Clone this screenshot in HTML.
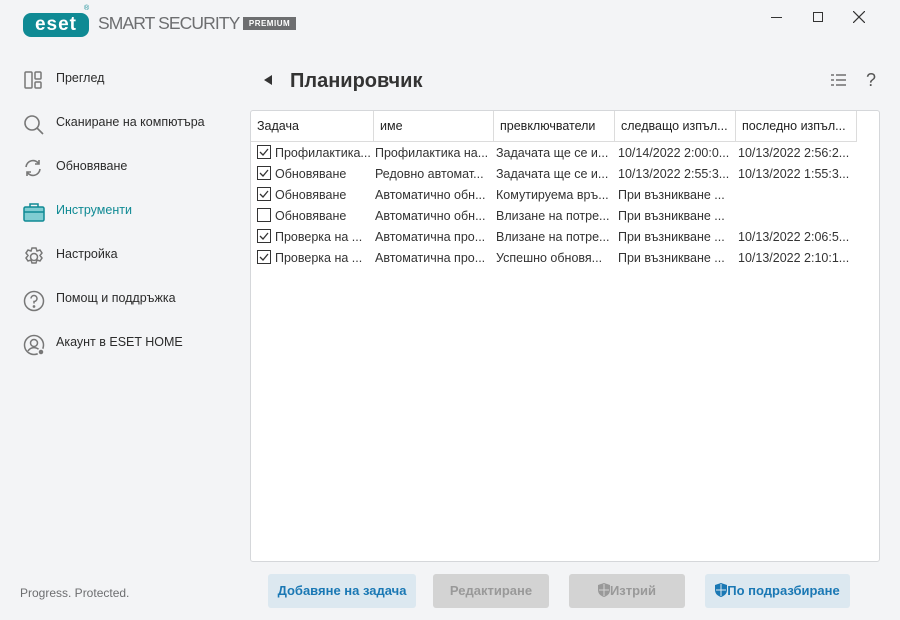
<!DOCTYPE html>
<html><head><meta charset="utf-8"><style>
*{margin:0;padding:0;box-sizing:border-box}
body{width:900px;height:620px;background:#f3f4f6;font-family:"Liberation Sans",sans-serif;color:#222;position:relative;overflow:hidden;font-size:13px}
.a{position:absolute}
.nav{position:absolute;left:56px;font-size:12.5px;color:#2b2b2b}
.ic{position:absolute;left:23px}
.tbl{position:absolute;left:250px;top:110px;width:630px;height:452px;background:#fff;border:1px solid #d5d7da;border-radius:3px;overflow:hidden}
.hd{position:absolute;top:0;height:31px;border-right:1px solid #dcdcdc;border-bottom:1px solid #dcdcdc;line-height:31px;padding-left:6px;font-size:12.5px;color:#222;white-space:nowrap}
.cell{position:absolute;font-size:12.5px;color:#333;white-space:nowrap;line-height:16px}
.cb{position:absolute;left:6px;width:14px;height:14px;border:1px solid #333;background:#fff}
.btn{position:absolute;top:574px;height:34px;border-radius:3px;font-size:13px;font-weight:bold;text-align:center;line-height:34px}
</style></head><body>
<!-- logo -->
<div class="a" style="left:23px;top:13px;width:66px;height:24px;background:#0f8a94;border-radius:8px;color:#fff;font-size:19px;font-weight:bold;line-height:23px;text-align:center;letter-spacing:1px">eset</div>
<div class="a" style="left:84px;top:5px;font-size:7px;color:#0f8a94">®</div>
<div class="a" style="left:98px;top:13px;font-size:17.5px;color:#6d6e70;letter-spacing:-0.9px">SMART SECURITY</div>
<div class="a" style="left:243px;top:17px;width:53px;height:13px;background:#6d6e70;color:#fff;font-size:8px;font-weight:bold;text-align:center;line-height:13px;letter-spacing:0.5px">PREMIUM</div>
<!-- window controls -->
<div class="a" style="left:771px;top:17px;width:11px;height:1px;background:#333"></div>
<div class="a" style="left:813px;top:12px;width:10px;height:10px;border:1px solid #333"></div>
<svg class="a" style="left:853px;top:11px" width="12" height="12"><path d="M0 0L12 12M12 0L0 12" stroke="#333" stroke-width="1.2"/></svg>
<svg class="a" style="left:831px;top:74px" width="15" height="13"><path d="M0 1h3M5 1h10M0 6h3M5 6h10M0 11h3M5 11h10" stroke="#555" stroke-width="1.2"/></svg>
<div class="a" style="left:866px;top:70px;font-size:18px;color:#555">?</div>
<!-- sidebar -->
<svg class="ic" style="top:70px" width="20" height="20" fill="none" stroke="#777" stroke-width="1.5"><rect x="2" y="2" width="7" height="16" rx="1"/><rect x="12" y="2" width="6" height="7" rx="1"/><rect x="12" y="12" width="6" height="6" rx="1"/></svg>
<div class="nav" style="top:71px">Преглед</div>
<svg class="ic" style="top:114px" width="22" height="22" fill="none" stroke="#777" stroke-width="1.6"><circle cx="9" cy="9" r="7"/><path d="M14 14l6 6"/></svg>
<div class="nav" style="top:115px">Сканиране на компютъра</div>
<svg class="ic" style="top:158px" width="20" height="20" fill="none" stroke="#777" stroke-width="1.6"><path d="M3 9a7 7 0 0 1 13-3M17 11a7 7 0 0 1-13 3M16 2v4h-4M4 18v-4h4"/></svg>
<div class="nav" style="top:159px">Обновяване</div>
<svg class="ic" style="top:202px" width="22" height="20"><rect x="1" y="5" width="20" height="14" rx="1.5" fill="#80cdd2" stroke="#0f8a94" stroke-width="1.5"/><path d="M7 5V2h8v3M1 10h20" stroke="#0f8a94" stroke-width="1.5" fill="none"/></svg>
<div class="nav" style="top:203px;color:#0f8a94">Инструменти</div>
<svg class="ic" style="top:246px" width="22" height="22" fill="none" stroke="#777" stroke-width="1.5"><circle cx="11" cy="11" r="3.5"/><path d="M9 2h4l1 3 3-1 2 3-2 2.5 2 2.5-2 3-3-1-1 3H9l-1-3-3 1-2-3 2-2.5L3 7l2-3 3 1z"/></svg>
<div class="nav" style="top:247px">Настройка</div>
<svg class="ic" style="top:290px" width="22" height="22" fill="none" stroke="#777" stroke-width="1.5"><circle cx="11" cy="11" r="9.5"/><path d="M8 8.5a3 3 0 1 1 3 3v2"/><circle cx="11" cy="16.5" r=".6" fill="#777"/></svg>
<div class="nav" style="top:291px">Помощ и поддръжка</div>
<svg class="ic" style="top:334px" width="24" height="24" fill="none" stroke="#777" stroke-width="1.5"><circle cx="11" cy="11" r="9.5"/><circle cx="11" cy="9" r="3.5"/><path d="M5 17a7 7 0 0 1 12 0"/><circle cx="18" cy="18" r="3" fill="#777" stroke="#f3f4f6"/></svg>
<div class="nav" style="top:335px">Акаунт в ESET HOME</div>
<div class="a" style="left:20px;top:586px;font-size:12px;color:#6d6e70">Progress. Protected.</div>
<!-- title -->
<svg class="a" style="left:264px;top:75px" width="8" height="10"><path d="M8 0v10L0 5z" fill="#333"/></svg>
<div class="a" style="left:290px;top:70px;font-size:20px;font-weight:bold;color:#333">Планировчик</div>
<!-- table -->
<div class="tbl">
<div class="hd" style="left:0;width:123px">Задача</div>
<div class="hd" style="left:123px;width:120px">име</div>
<div class="hd" style="left:243px;width:121px">превключватели</div>
<div class="hd" style="left:364px;width:121px">следващо изпъл...</div>
<div class="hd" style="left:485px;width:121px">последно изпъл...</div>
</div>
<div class="a" style="left:251px;top:0">
<div class="cb" style="top:145px"></div><div class="cb" style="top:166px"></div><div class="cb" style="top:187px"></div><div class="cb" style="top:208px"></div><div class="cb" style="top:229px"></div><div class="cb" style="top:250px"></div>
<svg class="a" style="left:6px;top:145px" width="14" height="120" fill="none" stroke="#333" stroke-width="1.3"><path d="M3 7l3 3 5-6M3 28l3 3 5-6M3 49l3 3 5-6M3 91l3 3 5-6M3 112l3 3 5-6"/></svg>
</div>
<div class="a" style="top:143px;left:0">
<div class="cell" style="left:275px;top:0;line-height:21px">Профилактика...<br>Обновяване<br>Обновяване<br>Обновяване<br>Проверка на ...<br>Проверка на ...</div>
<div class="cell" style="left:375px;top:0;line-height:21px">Профилактика на...<br>Редовно автомат...<br>Автоматично обн...<br>Автоматично обн...<br>Автоматична про...<br>Автоматична про...</div>
<div class="cell" style="left:496px;top:0;line-height:21px">Задачата ще се и...<br>Задачата ще се и...<br>Комутируема връ...<br>Влизане на потре...<br>Влизане на потре...<br>Успешно обновя...</div>
<div class="cell" style="left:618px;top:0;line-height:21px">10/14/2022 2:00:0...<br>10/13/2022 2:55:3...<br>При възникване ...<br>При възникване ...<br>При възникване ...<br>При възникване ...</div>
<div class="cell" style="left:738px;top:0;line-height:21px">10/13/2022 2:56:2...<br>10/13/2022 1:55:3...<br><br><br>10/13/2022 2:06:5...<br>10/13/2022 2:10:1...</div>
</div>
<!-- buttons -->
<div class="btn" style="left:268px;width:148px;background:#dce8f0;color:#1a78b4">Добавяне на задача</div>
<div class="btn" style="left:433px;width:116px;background:#d3d3d3;color:#999">Редактиране</div>
<div class="btn" style="left:569px;width:116px;background:#d3d3d3;color:#999"><svg width="12" height="14" style="vertical-align:-2px"><path d="M6 0L12 2v5c0 4-3 6-6 7-3-1-6-3-6-7V2z" fill="#999"/><path d="M6 1v12M1 7h10" stroke="#d3d3d3"/></svg>Изтрий</div>
<div class="btn" style="left:705px;width:145px;background:#dce8f0;color:#1a78b4"><svg width="12" height="14" style="vertical-align:-2px"><path d="M6 0L12 2v5c0 4-3 6-6 7-3-1-6-3-6-7V2z" fill="#1a78b4"/><path d="M6 1v12M1 7h10" stroke="#dce8f0"/></svg>По подразбиране</div>
</body></html>
